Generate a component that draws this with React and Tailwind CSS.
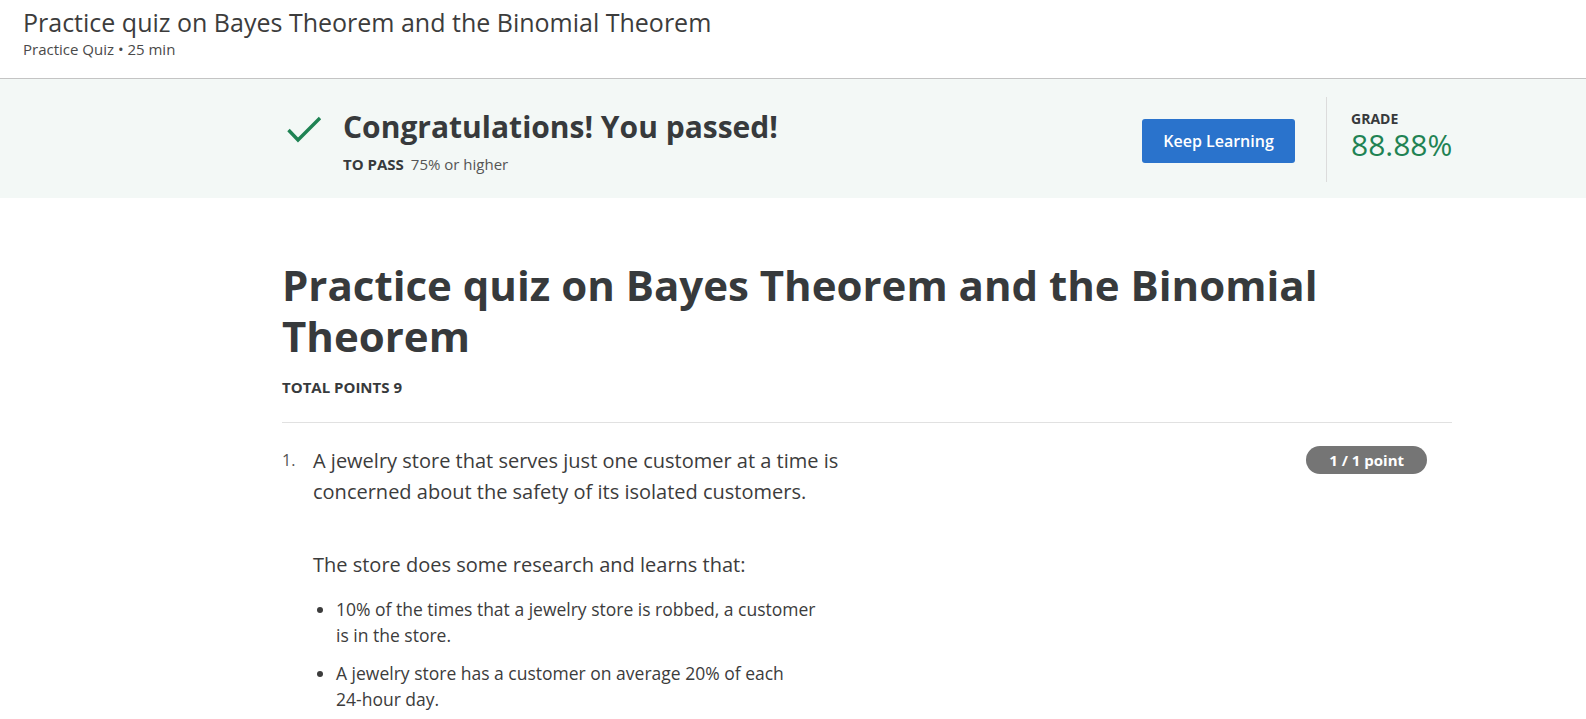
import React from "react";

export default function App() {
  const font = { fontFamily: '"Open Sans", "Noto Sans", sans-serif' };
  return (
    <div className="min-h-screen bg-white text-[#373a3c]" style={font}>
      {/* Top header */}
      <header className="h-[79px] border-b border-[#c4c4c4] pl-[23px] pt-[6px]">
        <h1 className="text-[25px] leading-[33px] font-normal text-[#3c3c3c]">
          Practice quiz on Bayes Theorem and the Binomial Theorem
        </h1>
        <div className="text-[15px] leading-[20px] text-[#4a4a4a]">Practice Quiz • 25 min</div>
      </header>

      {/* Pass banner */}
      <section className="bg-[#f3f8f6] h-[119px]">
        <div className="ml-[282px] w-[1170px] h-full flex items-start">
          <div className="flex items-start flex-1 mt-[29px]">
            <svg width="36" height="36" viewBox="0 0 36 36" className="ml-[5px] mt-[6px] shrink-0">
              <path d="M1.5 16 L11 26 L33 4" fill="none" stroke="#1f8354" strokeWidth="3.4" />
            </svg>
            <div className="ml-[20px]">
              <div className="text-[30px] leading-[38px] font-bold text-[#373a3c]">
                Congratulations! You passed!
              </div>
              <div className="mt-[8px] text-[15px] leading-[20px] text-[#555]">
                <span className="font-bold text-[#373a3c]">TO PASS</span>
                <span className="ml-[7px]">75% or higher</span>
              </div>
            </div>
          </div>
          <button className="mt-[40px] w-[153px] h-[44px] rounded-[3px] bg-[#2a73cc] text-white text-[16px] font-semibold">
            Keep Learning
          </button>
          <div className="mt-[18px] ml-[31px] w-px h-[85px] bg-[#dcdcdc]" />
          <div className="mt-[31px] w-[125px] pl-[24px]">
            <div className="text-[14px] leading-[18px] font-bold text-[#373a3c]">GRADE</div>
            <div className="text-[30px] leading-[34px] text-[#1f8354]">88.88%</div>
          </div>
        </div>
      </section>

      {/* Main content */}
      <main className="ml-[282px] w-[1170px] pt-[61px]">
        <h2 className="text-[42px] leading-[51px] font-bold text-[#373a3c]">
          Practice quiz on Bayes Theorem and the Binomial Theorem
        </h2>
        <div className="mt-[16px] text-[15px] leading-[20px] font-bold text-[#373a3c]">TOTAL POINTS 9</div>
        <div className="mt-[25px] border-t border-[#e1e1e1]" />

        <div className="flex pt-[22px]">
          <div className="w-[31px] text-[16px] leading-[31px] text-[#555]">1.</div>
          <div className="flex-1">
            <div className="flex justify-between items-start">
              <p className="w-[540px] text-[20px] leading-[31px] text-[#3c3c3c]">
                A jewelry store that serves just one customer at a time is concerned about the safety of its isolated customers.
              </p>
              <span className="mt-[1px] mr-[25px] h-[28px] px-[23px] rounded-full bg-[#757575] text-white text-[15px] font-bold leading-[28px]">
                1 / 1 point
              </span>
            </div>
            <p className="mt-[42px] text-[20px] leading-[31px] text-[#3c3c3c]">
              The store does some research and learns that:
            </p>
            <ul className="mt-[16px] w-[503px] list-disc pl-[23px] text-[17.5px] leading-[26px] text-[#3c3c3c] space-y-[12px]">
              <li>10% of the times that a jewelry store is robbed, a customer is in the store.</li>
              <li>
                A jewelry store has a customer on average 20% of each{" "}
                <span className="whitespace-nowrap">24-hour</span> day.
              </li>
            </ul>
          </div>
        </div>
      </main>
    </div>
  );
}
